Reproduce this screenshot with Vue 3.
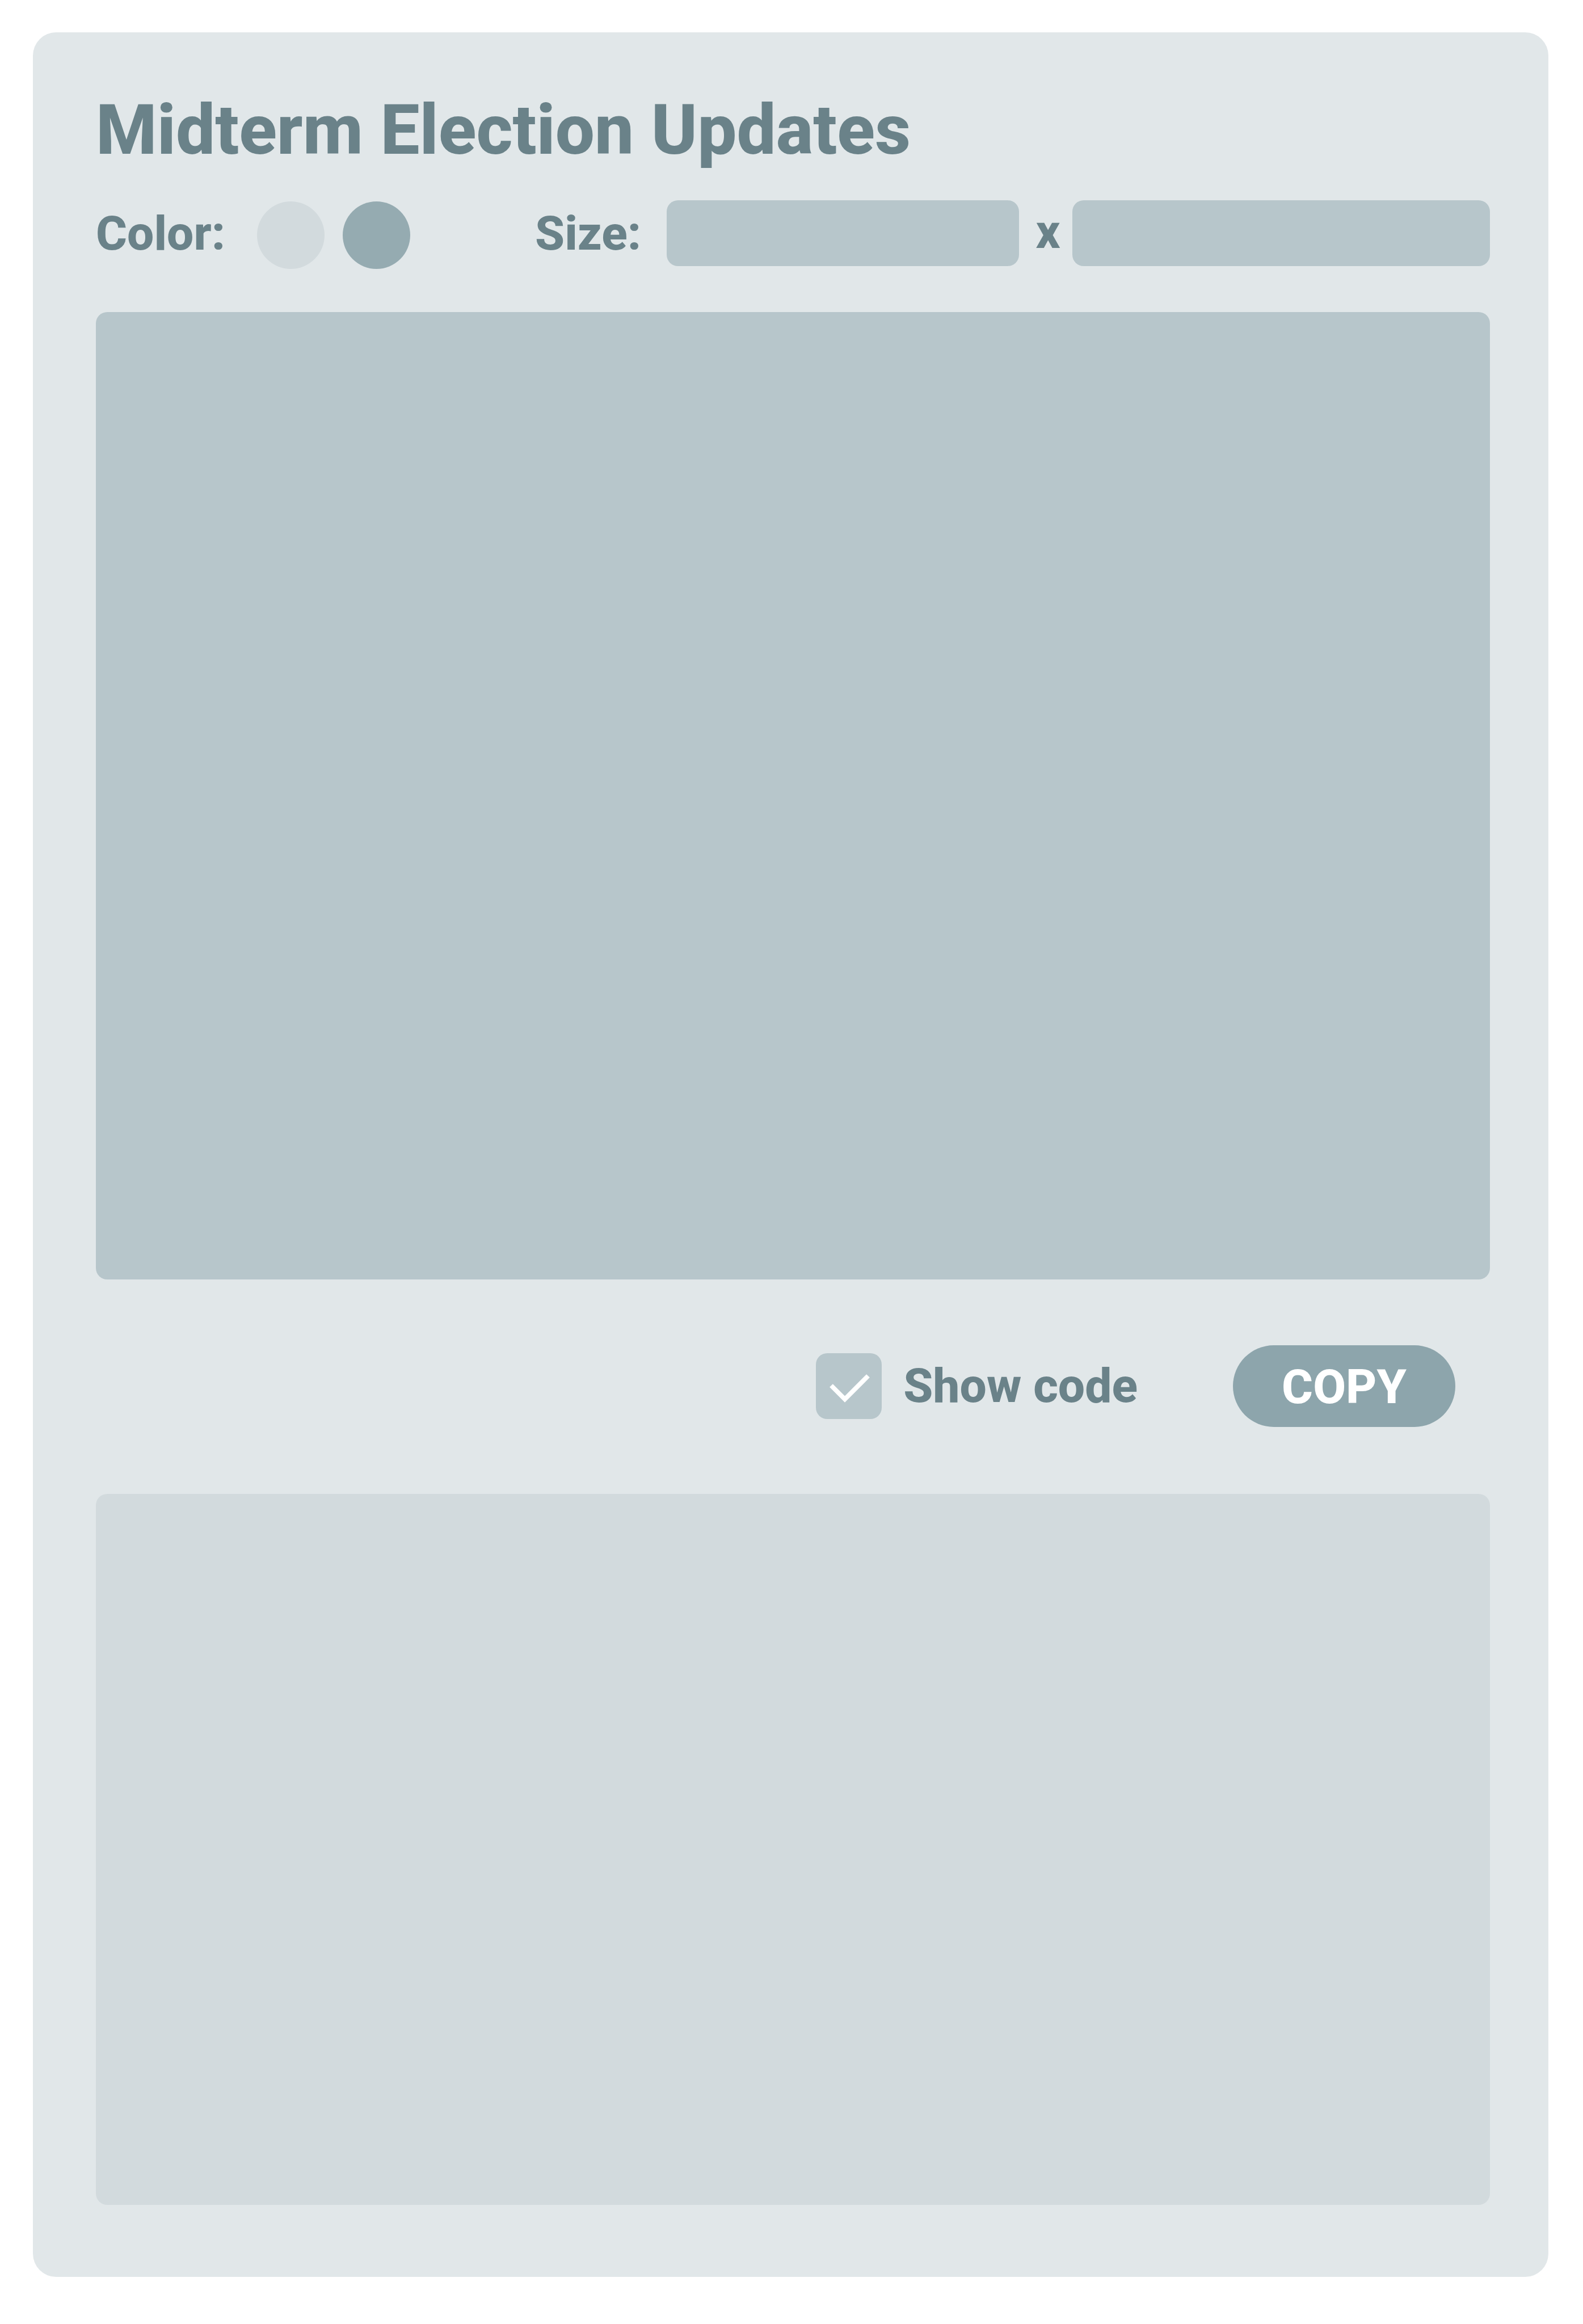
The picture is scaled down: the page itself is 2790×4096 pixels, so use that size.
<script setup>
import { ref } from 'vue'

const color = ref('dark')
const width = ref('')
const height = ref('')
const showCode = ref(true)
const code = ref('')
</script>

<template>
  <main class="panel">
    <h1 class="title">Midterm Election Updates</h1>

    <div class="controls">
      <div class="color-group" role="radiogroup" aria-labelledby="color-label">
        <span id="color-label" class="label color-label">Color:</span>
        <div class="swatches">
          <input v-model="color" class="swatch light" type="radio" name="color" value="light" aria-label="Light" />
          <input v-model="color" class="swatch dark" type="radio" name="color" value="dark" aria-label="Dark" />
        </div>
      </div>
      <div class="size-group">
        <label class="label size-label" for="width">Size:</label>
        <input id="width" v-model="width" class="field width-field" type="text" />
        <label class="label times" for="height">x</label>
        <input id="height" v-model="height" class="field height-field" type="text" />
      </div>
    </div>

    <section class="preview" aria-label="Preview"></section>

    <div class="actions">
      <label class="toggle">
        <span class="box">
          <input v-model="showCode" class="checkbox" type="checkbox" />
          <svg v-if="showCode" class="check" viewBox="0 0 116 116" aria-hidden="true">
            <path d="M27 57 L51 81 L92 40" fill="none" stroke="#fff" stroke-width="8" />
          </svg>
        </span>
        <span class="label">Show code</span>
      </label>
      <button class="copy" type="button">COPY</button>
    </div>

    <textarea v-model="code" class="code" :class="{ concealed: !showCode }" aria-label="Embed code" readonly></textarea>
  </main>
</template>

<style>
body {
  margin: 0;
  background: #fff;
}
</style>

<style scoped>
.panel {
  box-sizing: border-box;
  margin: 57px 61px 83px 58px;
  padding: 100px 103px 127px 111px;
  border-radius: 41px;
  background: #e1e7e9;
  color: #6a8289;
  font-family: Roboto, "Liberation Sans", sans-serif;
  font-weight: 800;
  display: flow-root;
}

.title {
  margin: 0 0 52px;
  font-size: 123px;
  line-height: 144px;
  font-weight: 800;
}

.label {
  font-size: 84px;
  line-height: 118px;
  white-space: nowrap;
}

.controls {
  display: flex;
  align-items: flex-start;
  gap: 220px;
  margin-bottom: 76px;
}

.color-group {
  display: flex;
}

.color-label {
  width: 284px;
}

.swatches {
  display: flex;
  gap: 32px;
  padding-top: 2px;
}

.swatch {
  appearance: none;
  width: 119px;
  height: 119px;
  margin: 0;
  border-radius: 50%;
}

.light {
  background: #d2dadd;
}

.dark {
  background: #95abb1;
}

.size-group {
  display: flex;
  flex: 1;
  min-width: 0;
}

.size-label {
  width: 232px;
}

.field {
  box-sizing: border-box;
  min-width: 0;
  height: 116px;
  padding: 0 28px;
  border: 0;
  border-radius: 20px;
  background: #b7c6cb;
  color: inherit;
  font: inherit;
  font-size: 64px;
}

.width-field {
  flex: 565 1 0;
}

.height-field {
  flex: 680 1 0;
}

.times {
  box-sizing: border-box;
  width: 94px;
  padding-left: 8px;
  line-height: 112px;
  text-align: center;
}

.preview {
  aspect-ratio: 2457 / 1705;
  border-radius: 20px;
  background: #b7c6cb;
}

.actions {
  display: flex;
  align-items: center;
  justify-content: flex-end;
  gap: 168px;
  margin: 116px 61px 118px 0;
}

.toggle {
  display: flex;
  align-items: center;
  gap: 38px;
}

.box {
  display: grid;
  width: 116px;
  height: 116px;
}

.checkbox,
.check {
  grid-area: 1 / 1;
  width: 116px;
  height: 116px;
}

.checkbox {
  appearance: none;
  margin: 0;
  border-radius: 20px;
  background: #b7c6cb;
}

.check {
  pointer-events: none;
}

.copy {
  width: 392px;
  height: 144px;
  padding: 2px 0 0;
  border: 0;
  border-radius: 72px;
  background: #8da5ac;
  color: #fff;
  font: inherit;
  font-size: 84px;
}

.code {
  display: block;
  box-sizing: border-box;
  width: 100%;
  aspect-ratio: 2457 / 1253;
  padding: 40px;
  border: 0;
  border-radius: 20px;
  background: #d2dadd;
  color: inherit;
  font: 48px "Liberation Mono", monospace;
  resize: none;
}

.concealed {
  visibility: hidden;
}
</style>
